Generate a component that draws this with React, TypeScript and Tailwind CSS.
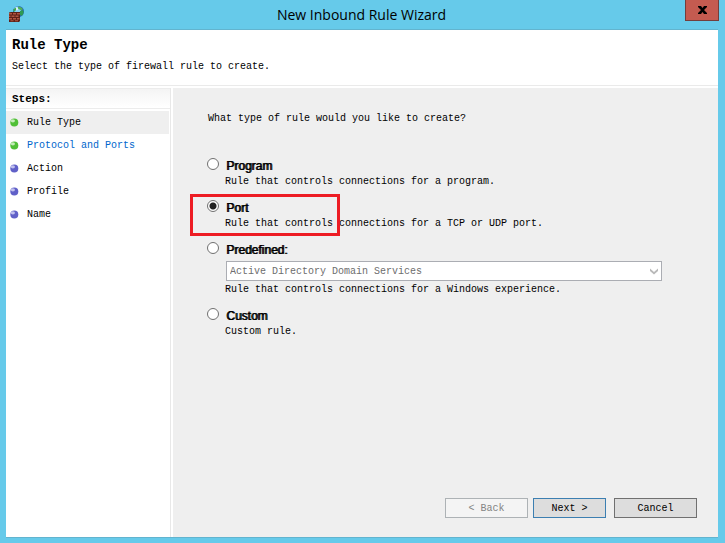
import React, { useState } from 'react';

const steps = [
  { label: 'Rule Type', done: true, current: true },
  { label: 'Protocol and Ports', done: true, link: true },
  { label: 'Action' },
  { label: 'Profile' },
  { label: 'Name' },
];

const options = [
  { id: 'program', label: 'Program', text: 'Rule that controls connections for a program.' },
  { id: 'port', label: 'Port', text: 'Rule that controls connections for a TCP or UDP port.', marked: true },
  { id: 'predefined', label: 'Predefined:', text: 'Rule that controls connections for a Windows experience.', services: true },
  { id: 'custom', label: 'Custom', text: 'Custom rule.' },
];

function FirewallIcon() {
  return (
    <svg width="16" height="16" viewBox="0 0 16 16" aria-hidden="true">
      <circle cx="9.500" cy="5.500" r="5.500" fill="#2460c0" />
      <circle cx="8.500" cy="4.200" r="3.600" fill="#86d0f2" />
      <circle cx="7.500" cy="2.800" r="1.500" fill="#e4f8fb" />
      <path d="M9 .4c2 0 4 1 5 2.600l-1.500 1.500-2-1-1.500-1z" fill="#4fb05a" />
      <path d="M11 5l3-1 .8 2-1 3-2 1-1-2z" fill="#2e9a52" />
      <path d="M4.500 3.500l2-2 .8 1.500-1 2-1.800 1z" fill="#3da64a" />
      <path d="M0 6.500l2-.5h9v9l-1 1H0z" fill="#5c2018" />
      <path d="M0 7h3v1.500H0zM4 7h3v1.500H4zM8 7h3v1.500H8zM0 9.500h1.500V11H0zM2.500 9.500h3V11h-3zM6.500 9.500h3V11h-3zM0 12h3v1.500H0zM4 12h3v1.500H4zM8 12h2.500v1.500H8zM1.500 14.200h3v1h-3zM6 14.200h3v1H6z" fill="#b05440" />
    </svg>
  );
}

function StepBullet({ done }: { done?: boolean }) {
  return (
    <svg width="9" height="9" viewBox="0 0 9 9" aria-hidden="true" className="shrink-0">
      <circle cx="4.300" cy="4.500" r="4" fill={done ? '#4fbf36' : '#6060c8'} />
      <ellipse cx="2.900" cy="2.800" rx="2.100" ry="1.600" fill={done ? '#c3ecb8' : '#c0c0ee'} />
    </svg>
  );
}

export default function App() {
  const [selected, setSelected] = useState('port');

  return (
    <div className="min-h-screen flex flex-col bg-[#66caea] px-[6px] pb-[5px] pr-[7px] font-['Liberation_Mono',monospace] text-[10px] leading-4 text-black">
      <header className="relative h-[30px] flex items-center border-b border-[#62b4cf]">
        <div className="pl-[3px] pb-[2px]">
          <FirewallIcon />
        </div>
        <h1 className="flex-1 pr-5 text-center font-['Open_Sans',sans-serif] text-[14px] leading-5">New Inbound Rule Wizard</h1>
        <button aria-label="Close" className="absolute top-0 right-[-1px] h-[21px] w-[34px] flex items-center justify-center bg-[#c45b50] border border-t-0 border-[#733e3c]">
          <svg width="9" height="8" viewBox="0 0 9 8" aria-hidden="true">
            <path d="M0 0h3l1.500 2L6 0h3v1L6 4l3 3v1H6L4.500 6 3 8H0V7l3-3-3-3z" fill="#000" />
          </svg>
        </button>
      </header>

      <div className="flex-1 flex flex-col bg-white border-b border-[#62b4cf]">
        <div className="h-14 px-[6px] pt-[5px] border-b border-[#eaeaea]">
          <h2 className="text-[14px] leading-5 font-bold">Rule Type</h2>
          <p className="pt-[4px]">Select the type of firewall rule to create.</p>
        </div>

        <div className="flex-1 flex gap-[2px] pt-[2px]">
          <nav className="w-[165px] shrink-0 border-r border-[#e8e8e8]">
            <h3 className="h-[21px] pl-[6px] mb-[2px] text-[11px] leading-5 font-bold border-y border-[#ececec] bg-linear-to-b from-[#f4f4f4] to-white">Steps:</h3>
            <ul>
              {steps.map((step) => (
                <li
                  key={step.label}
                  className={step.current ? 'h-[23px] mr-px pl-[4px] flex items-center gap-[8px] bg-[#efefef]' : 'h-[23px] mr-px pl-[4px] flex items-center gap-[8px]'}
                >
                  <StepBullet done={step.done} />
                  {step.link ? (
                    <a href="#ports" className="text-[#0066cc]">{step.label}</a>
                  ) : (
                    <span>{step.label}</span>
                  )}
                </li>
              ))}
            </ul>
          </nav>

          <main className="flex-1 flex flex-col justify-between bg-[#efefef] pl-[34px] pr-[21px] pt-[23px] pb-[19px]">
            <fieldset className="pr-[35px]">
              <legend className="pl-[1px] mb-[31px]">What type of rule would you like to create?</legend>
              <div className="flex flex-col gap-[10px]">
                {options.map((option) => (
                  <div key={option.id} className="relative">
                    <div className="flex items-start gap-[7px]">
                      <input
                        type="radio"
                        id={option.id}
                        name="ruleType"
                        checked={selected === option.id}
                        onChange={() => setSelected(option.id)}
                        className="appearance-none w-3 h-3 rounded-full border border-[#707070] bg-white checked:bg-[radial-gradient(circle,#222_3px,white_4px)]"
                      />
                      <label htmlFor={option.id} className="font-['Liberation_Sans',sans-serif] text-[12px] leading-4 [text-shadow:1px_0_0_#000]">
                        {option.label}
                      </label>
                    </div>
                    {option.services && (
                      <div className="relative ml-[19px] mt-[3px] mb-px">
                        <select
                          aria-label="Predefined rule"
                          disabled={selected !== 'predefined'}
                          className="appearance-none block w-full h-5 pl-[3px] pt-px bg-white border border-[#abadb3] text-[#6d6d6d] rounded-none opacity-100"
                        >
                          <option>Active Directory Domain Services</option>
                        </select>
                        <svg width="8" height="7" viewBox="0 0 8 7" aria-hidden="true" className="absolute right-[4px] top-[7px] pointer-events-none">
                          <path d="M0 .5l4 3.500L8 .5v2.500L4 6.500 0 3z" fill="#b9b9b9" />
                        </svg>
                      </div>
                    )}
                    <p className="pl-[18px]">{option.text}</p>
                    {option.marked && (
                      <div className="absolute left-[-17px] top-[-6px] w-[150px] h-[42px] border-3 border-[#ed1c24] pointer-events-none"></div>
                    )}
                  </div>
                ))}
              </div>
            </fieldset>

            <div className="flex justify-end">
              <button disabled className="w-[83px] h-5 pt-[2px] mr-[5px] border border-[#adb2b5] bg-[#f4f4f4] text-[#838383]">&lt; Back</button>
              <button className="w-[73px] h-5 pt-[2px] mr-[8px] border border-[#3c7fb1] bg-[#dddddd]">Next &gt;</button>
              <button className="w-[83px] h-5 pt-[2px] border border-[#707070] bg-[#dddddd]">Cancel</button>
            </div>
          </main>
        </div>
      </div>
    </div>
  );
}
